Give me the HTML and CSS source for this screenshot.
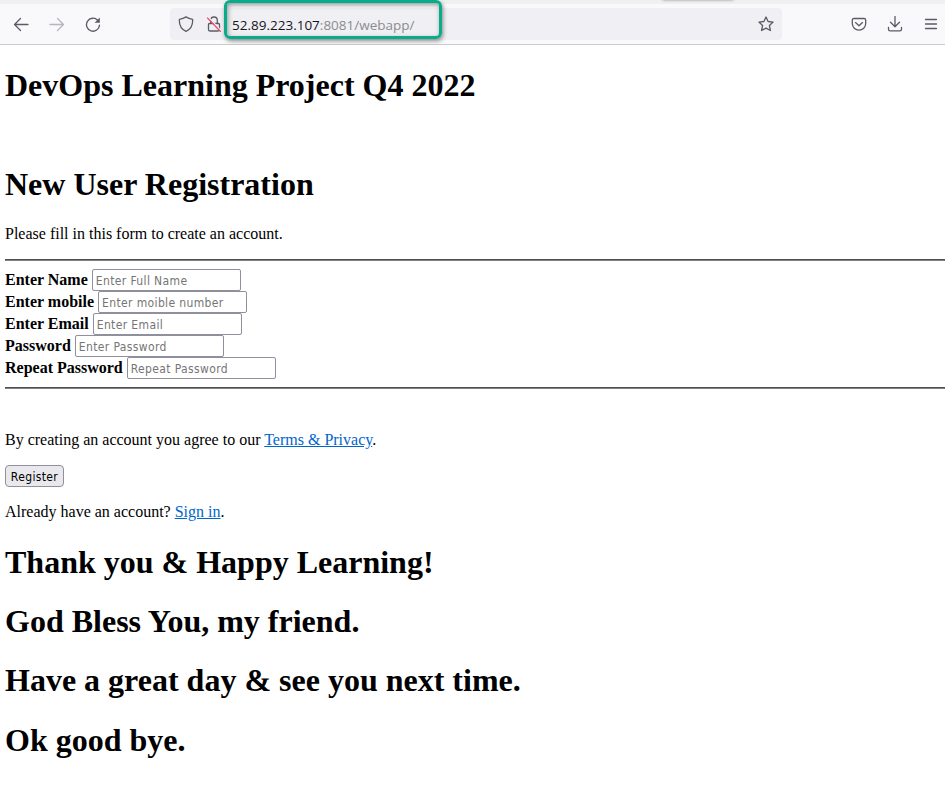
FILE: index.html
```html
<!DOCTYPE html>
<html lang="en">
<head>
<meta charset="utf-8">
<title>DevOps Learning Project</title>
<link rel="stylesheet" href="styles.css">
</head>
<body>
<header class="browser">
  <div class="tabstrip"><span class="tab-shadow"></span></div>
  <div class="toolbar">
    <nav class="nav">
      <svg class="icon" viewBox="0 0 16 16"><path d="M15 8.500H1.500M7.500 2.500l-6 6 6 6"/></svg>
      <svg class="icon disabled" viewBox="0 0 16 16"><path d="M1 8.500h13.500M8.500 2.500l6 6-6 6"/></svg>
      <svg class="icon" viewBox="0 0 16 16"><path d="M12.600 4.100A6.500 6.500 0 1 0 14.500 9.100"/><path class="solid" d="M14.800 1.500v5.300H9.600z"/></svg>
    </nav>
    <div class="urlbar">
      <svg class="icon shield" viewBox="0 0 16 16"><path d="M8 .9Q10.600 2.700 14.600 3.300C15 8.800 12.500 13.300 8 15.300C3.500 13.300 1 8.800 1.400 3.300Q5.400 2.700 8 .9z"/></svg>
      <svg class="icon lock" viewBox="0 0 16 16"><path d="M4.700 7V4.300a3.300 3.300 0 0 1 6.600 0V7M3.500 7.500h9q1 0 1 1v5q0 1.500-1.500 1.500H4q-1.500 0-1.500-1.500v-5q0-1 1-1z"/><path class="gap" d="M2.300 1l12.700 13.500"/><path class="strike" d="M1.500 2l13 13.500"/></svg>
      <div class="address"><span class="host">52.89.223.107</span><span class="path">:8081/webapp/</span><span class="highlight"></span></div>
      <svg class="icon star" viewBox="0 0 16 16"><path d="M8 1l2.100 4.500 5 .6-3.700 3.400 1 5L8 12.100l-4.400 2.400 1-5L.9 6.100l5-.6z"/></svg>
    </div>
    <div class="tools">
      <svg class="icon" viewBox="0 0 16 16"><path d="M3 2.500h10q1.700 0 1.700 1.700v3.300a6.700 6.700 0 0 1-13.400 0V4.200Q1.300 2.500 3 2.500zM4.500 6.600L8 9.800l3.500-3.200"/></svg>
      <svg class="icon" viewBox="0 0 16 16"><path d="M8 .5v10M3.500 6.200L8 10.700l4.500-4.500M1.500 11.500v1.700q0 1.600 1.600 1.600h9.800q1.600 0 1.600-1.600v-1.700"/></svg>
      <svg class="icon" viewBox="0 0 16 16"><path d="M2.500 3.500h11M2.500 8h11M2.500 12.500h11"/></svg>
    </div>
  </div>
</header>
<main class="page">
  <h1>DevOps Learning Project Q4 2022</h1>
  <form class="form">
    <h1>New User Registration</h1>
    <p>Please fill in this form to create an account.</p>
    <hr>
    <div class="row"><label for="name">Enter Name</label><input id="name" type="text" placeholder="Enter Full Name"></div>
    <div class="row"><label for="mobile">Enter mobile</label><input id="mobile" type="text" placeholder="Enter moible number"></div>
    <div class="row"><label for="email">Enter Email</label><input id="email" type="text" placeholder="Enter Email"></div>
    <div class="row"><label for="psw">Password</label><input id="psw" type="password" placeholder="Enter Password"></div>
    <div class="row"><label for="psw2">Repeat Password</label><input id="psw2" type="password" placeholder="Repeat Password"></div>
    <hr>
    <p class="terms">By creating an account you agree to our <a href="#">Terms &amp; Privacy</a>.</p>
    <button type="button">Register</button>
    <p class="signin">Already have an account? <a href="#">Sign in</a>.</p>
  </form>
  <h1>Thank you &amp; Happy Learning!</h1>
  <h1>God Bless You, my friend.</h1>
  <h1>Have a great day &amp; see you next time.</h1>
  <h1>Ok good bye.</h1>
</main>
</body>
</html>
```
FILE: styles.css
```css
* { box-sizing: border-box; }
body {
  margin: 0;
  height: 812px;
  overflow: hidden;
  background: #fff;
  color: #000;
  font: 16px/18px "Liberation Serif", serif;
}
.browser { height: 45px; background: #f9f9fb; border-bottom: 1px solid #ccc; }
.tabstrip { height: 4px; background: #f0f0f0; overflow: hidden; }
.tab-shadow {
  display: block;
  width: 72px;
  height: 4px;
  margin: -4px 0 0 662px;
  border-radius: 3px;
  box-shadow: 0 0 3px #888;
}
.toolbar { display: flex; height: 40px; align-items: center; }
.nav { display: flex; width: 170px; gap: 20px; padding-left: 13px; }
.icon {
  display: block;
  flex: none;
  width: 16px;
  height: 16px;
  fill: none;
  stroke: #5b5b66;
  stroke-width: 1.3;
  stroke-linecap: round;
  stroke-linejoin: round;
}
.disabled { opacity: .42; }
.solid { fill: #5b5b66; stroke: none; }
.gap { stroke: #f0f0f4; }
.strike { stroke: #e8486c; stroke-width: 1.1; }
.urlbar {
  display: flex;
  width: 612px;
  height: 32px;
  align-items: center;
  padding: 0 8px;
  border-radius: 4px;
  background: #f0f0f4;
}
.lock { margin-left: 12px; }
.address {
  position: relative;
  flex: 1;
  height: 32px;
  margin-left: 10px;
  font: 13.5px/34px "Open Sans", "Noto Sans", sans-serif;
  white-space: nowrap;
}
.host { color: #15141a; }
.path { color: #8b8b90; }
.highlight {
  position: absolute;
  top: -8px;
  left: -8px;
  width: 218px;
  height: 39px;
  border: 3px solid #08ac8b;
  border-radius: 6px;
  box-shadow: 1px 2px 4px #888, inset 1px 2px 5px #999;
}
.tools { display: flex; gap: 20px; padding-left: 69px; }
.page { padding: 21px 0 0 5px; }
h1 { margin: 0 0 21.3px; font-size: 32px; line-height: 38px; }
.form { margin: 61px 0 21.8px; }
p { margin: 0; }
.form > h1 { margin-bottom: 22px; }
hr { height: 2px; margin: 16px 0 8px; border: 0; border-top: 1px solid #505050; border-bottom: 1px solid #808080; }
.row { display: flex; height: 22px; gap: 4px; align-items: center; font-weight: bold; }
.row + hr { margin: 8px 0 42px; }
input, button {
  font: 12px/16px "DejaVu Sans Condensed", "Noto Sans", sans-serif;
  letter-spacing: .37px;
}
input {
  width: 149px;
  height: 22px;
  padding: 2px 3px 0;
  border: 1px solid #8f8f9d;
  border-radius: 2px;
  background: #fff;
}
input::placeholder { color: #757575; opacity: 1; }
button {
  display: block;
  width: 59px;
  height: 22px;
  margin: 16px 0;
  padding: 1px 0 0;
  border: 1px solid #8f8f9d;
  border-radius: 4px;
  background: #e9e9ed;
  color: #000;
}
a { color: #0066cc; text-decoration: underline; }
```
